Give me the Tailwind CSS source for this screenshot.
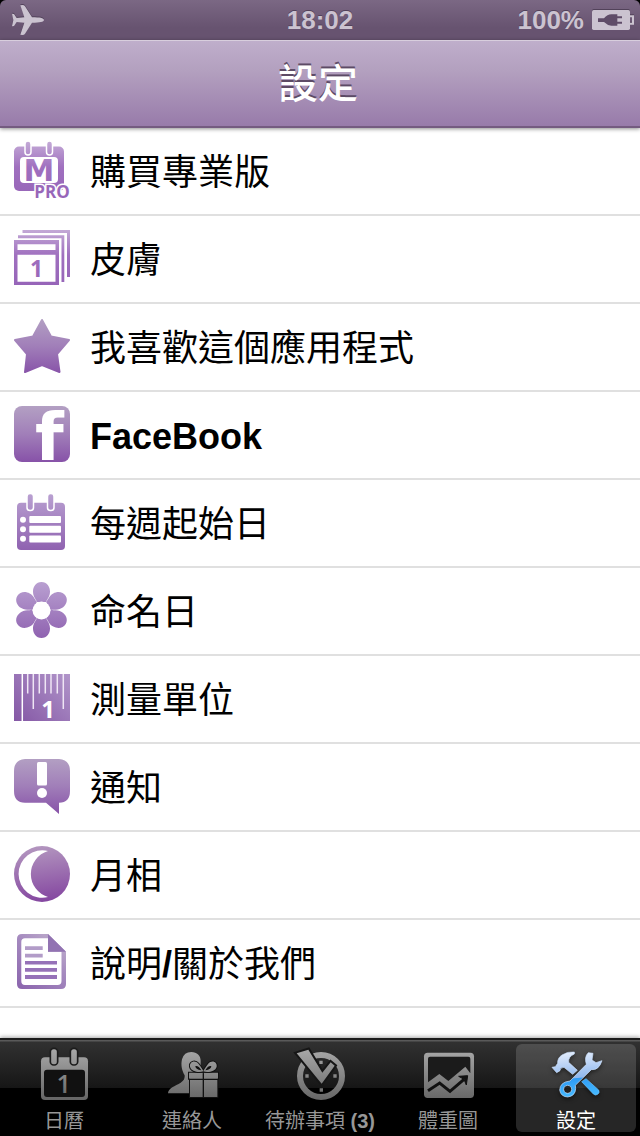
<!DOCTYPE html>
<html lang="zh-Hant">
<head>
    <meta charset="UTF-8">
    <meta name="viewport" content="width=device-width, initial-scale=1.0">
    <title>設定</title>
    <script src="https://cdn.jsdelivr.net/npm/@tailwindcss/browser@4"></script>
</head>
<body class="min-h-screen flex flex-col bg-black font-['Liberation_Sans','Noto_Sans_CJK_TC',sans-serif]">
    <!-- Shared gradients -->
    <svg class="absolute w-0 h-0" aria-hidden="true">
        <defs>
            <linearGradient id="purple" gradientUnits="userSpaceOnUse" x1="0" y1="0" x2="0" y2="56">
                <stop offset="0" stop-color="#b3a0c3"/>
                <stop offset="0.5" stop-color="#a17fb9"/>
                <stop offset="1" stop-color="#8752a8"/>
            </linearGradient>
            <linearGradient id="violet" gradientUnits="userSpaceOnUse" x1="0" y1="0" x2="0" y2="56">
                <stop offset="0" stop-color="#c3a9d6"/>
                <stop offset="0.45" stop-color="#a070bf"/>
                <stop offset="1" stop-color="#9664b8"/>
            </linearGradient>
            <linearGradient id="lilac" gradientUnits="userSpaceOnUse" x1="0" y1="0" x2="0" y2="56">
                <stop offset="0" stop-color="#b9a0d1"/>
                <stop offset="1" stop-color="#8f62b0"/>
            </linearGradient>
            <linearGradient id="ruler" gradientUnits="userSpaceOnUse" x1="0" y1="51" x2="50" y2="0">
                <stop offset="0" stop-color="#8457a5"/>
                <stop offset="1" stop-color="#b094c9"/>
            </linearGradient>
            <linearGradient id="moon" gradientUnits="userSpaceOnUse" x1="24" y1="0" x2="32" y2="56">
                <stop offset="0" stop-color="#b396bf"/>
                <stop offset="1" stop-color="#8446a0"/>
            </linearGradient>
            <linearGradient id="paper" gradientUnits="userSpaceOnUse" x1="52" y1="0" x2="8" y2="56">
                <stop offset="0" stop-color="#a78dbf"/>
                <stop offset="0.2" stop-color="#b7a3c8"/>
                <stop offset="0.45" stop-color="#a58abf"/>
                <stop offset="1" stop-color="#8c66ae"/>
            </linearGradient>
            <linearGradient id="gray" gradientUnits="userSpaceOnUse" x1="0" y1="16" x2="0" y2="168">
                <stop offset="0" stop-color="#a8a8a8"/>
                <stop offset="1" stop-color="#666666"/>
            </linearGradient>
            <linearGradient id="blue" gradientUnits="userSpaceOnUse" x1="80" y1="20" x2="92" y2="160">
                <stop offset="0" stop-color="#e6eefc"/>
                <stop offset="0.58" stop-color="#8fb8ef"/>
                <stop offset="0.6" stop-color="#2f9bf5"/>
                <stop offset="1" stop-color="#46bbff"/>
            </linearGradient>
        </defs>
    </svg>

    <!-- Status bar -->
    <div class="h-10 px-3 grid grid-cols-3 items-center rounded-t-md bg-linear-to-b from-[#7b6884] to-[#675370] to-70% text-[#cbc3d0] text-[26px] leading-10 font-bold">
        <svg class="w-8 h-[30px] drop-shadow-[0_-1px_0_#52425a]" viewBox="0 0 96 90" fill="currentColor" role="img" aria-label="飛航模式">
            <path d="M96 45C95 39 84 37 60 37L39 4Q37 0 31 0L25 1L37 37L14 39L6 27L0 26L4 45L0 64L6 63L14 51L37 53L25 89L31 90Q37 90 39 86L60 53C84 53 95 51 96 45Z"/>
        </svg>
        <div class="text-center [text-shadow:0_-1px_0_#52425a]">18:02</div>
        <div class="flex items-center justify-end gap-2 -mr-1.5">
            <span class="[text-shadow:0_-1px_0_#52425a]">100%</span>
            <svg class="w-[42px] h-5 shrink-0 drop-shadow-[0_-1px_0_#52425a]" viewBox="0 0 126 60" role="img" aria-label="充電中">
                <rect width="114" height="60" rx="5" fill="currentColor"/>
                <path d="M114 19H123V41H114" fill="none" stroke="currentColor" stroke-width="6"/>
                <path d="M18 25H36Q46 13 58 13H76V19H90V25H76V35H90V41H76V47H58Q46 46 36 36H18Z" fill="#5f4c68"/>
            </svg>
        </div>
    </div>

    <!-- Title bar -->
    <header class="relative z-10 h-[88px] pr-1 flex items-center justify-center border-t border-b-2 border-t-[#d8cedd] border-b-[#745b80] bg-linear-to-b from-[#bfaecb] via-[#b3a0bf] via-35% to-[#987baa] shadow-[0_1px_4px_rgba(0,0,0,0.45)]">
        <h1 class="text-[40px] leading-[48px] font-medium text-white [text-shadow:0_-2px_0_#5d4b66]">設定</h1>
    </header>

    <!-- Settings list -->
    <main class="flex-1 bg-white text-black text-4xl">
        <ul>
            <li class="border-b-2 border-[#e0e0e0]">
                <a href="#" class="h-[86px] px-3.5 pt-3.5 flex items-start gap-5">
                    <svg class="size-14 shrink-0 overflow-visible" viewBox="0 0 56 56" fill="url(#violet)" aria-hidden="true">
                        <rect y="4.5" width="50" height="44.5" rx="5"/>
                        <rect x="11" y="-1" width="6" height="14" rx="3" stroke="#fff" stroke-width="1.5"/>
                        <rect x="32.500" y="-1" width="6" height="14" rx="3" stroke="#fff" stroke-width="1.5"/>
                        <rect x="6" y="15" width="38" height="26" rx="4" fill="#fff"/>
                        <text x="25" y="39" text-anchor="middle" font-family="DejaVu Sans" font-weight="700" font-size="31">M</text>
                        <text x="38" y="55.500" text-anchor="middle" font-family="Open Sans" font-weight="700" font-size="17" stroke="#fff" stroke-width="3" paint-order="stroke">PRO</text>
                    </svg>
                    <span class="leading-[62px]">購買專業版</span>
                </a>
            </li>
            <li class="border-b-2 border-[#e0e0e0]">
                <a href="#" class="h-[86px] px-3.5 pt-3.5 flex items-start gap-5">
                    <svg class="size-14 shrink-0" viewBox="0 0 56 56" aria-hidden="true">
                        <path d="M8.500 0H56V47H53V3H8.500Z M4 5.300H50.300V52H47.500V8.300H4Z" fill="url(#violet)"/>
                        <path d="M0 10H45V55H0Z M3.500 14.300V20H41.500V14.300Z M3.500 24.700V51.700H41.500V24.700Z" fill="url(#violet)" fill-rule="evenodd"/>
                        <text x="22.500" y="47" text-anchor="middle" font-family="Open Sans" font-weight="700" font-size="23" fill="url(#violet)">1</text>
                    </svg>
                    <span class="leading-[62px]">皮膚</span>
                </a>
            </li>
            <li class="border-b-2 border-[#e0e0e0]">
                <a href="#" class="h-[86px] px-3.5 pt-3.5 flex items-start gap-5">
                    <svg class="size-14 shrink-0" viewBox="0 0 56 56" aria-hidden="true">
                        <path d="M28 2L37 18.500L55 22L43 36L45.500 54L28 47L11 54L13 36L1 22L19 18.500Z" fill="url(#purple)" stroke="url(#purple)" stroke-width="2" stroke-linejoin="round"/>
                    </svg>
                    <span class="leading-[62px]">我喜歡這個應用程式</span>
                </a>
            </li>
            <li class="border-b-2 border-[#e0e0e0]">
                <a href="#" class="h-[86px] px-3.5 pt-3.5 flex items-start gap-5">
                    <svg class="size-14 shrink-0 overflow-visible" viewBox="0 0 56 56" aria-hidden="true">
                        <rect width="56" height="56" rx="8" fill="url(#purple)"/>
                        <text x="21" y="54" font-family="DejaVu Sans" font-weight="700" font-size="66" fill="#fff">f</text>
                    </svg>
                    <span class="leading-[62px] font-bold">FaceBook</span>
                </a>
            </li>
            <li class="border-b-2 border-[#e0e0e0]">
                <a href="#" class="h-[86px] px-3.5 pt-3.5 flex items-start gap-5">
                    <svg class="size-14 shrink-0" viewBox="0 0 56 56" fill="url(#lilac)" aria-hidden="true">
                        <rect x="3" y="8.700" width="48" height="47.300" rx="4"/>
                        <rect x="13" y="-0.500" width="6.500" height="17" rx="3" stroke="#fff" stroke-width="1.500"/>
                        <rect x="33.500" y="-0.500" width="6.500" height="17" rx="3" stroke="#fff" stroke-width="1.500"/>
                        <g fill="#fff">
                            <circle cx="9" cy="25.700" r="3"/>
                            <circle cx="9" cy="35.200" r="3"/>
                            <circle cx="9" cy="44.800" r="3"/>
                            <rect x="15.300" y="22" width="31.700" height="7" rx="1"/>
                            <rect x="15.300" y="31.800" width="31.700" height="7" rx="1"/>
                            <rect x="15.300" y="41.500" width="31.700" height="7" rx="1"/>
                        </g>
                    </svg>
                    <span class="leading-[62px]">每週起始日</span>
                </a>
            </li>
            <li class="border-b-2 border-[#e0e0e0]">
                <a href="#" class="h-[86px] px-3.5 pt-3.5 flex items-start gap-5">
                    <svg class="size-14 shrink-0" viewBox="0 0 56 56" aria-hidden="true">
                        <clipPath id="petals">
                            <path d="M27.500 0C33 0 36 5 36 9.500C36 14 34 16 32 20H23C21 16 19 14 19 9.500C19 5 22 0 27.500 0Z"/>
                            <path d="M27.500 0C33 0 36 5 36 9.500C36 14 34 16 32 20H23C21 16 19 14 19 9.500C19 5 22 0 27.500 0Z" transform="rotate(60 27.500 28)"/>
                            <path d="M27.500 0C33 0 36 5 36 9.500C36 14 34 16 32 20H23C21 16 19 14 19 9.500C19 5 22 0 27.500 0Z" transform="rotate(120 27.500 28)"/>
                            <path d="M27.500 0C33 0 36 5 36 9.500C36 14 34 16 32 20H23C21 16 19 14 19 9.500C19 5 22 0 27.500 0Z" transform="rotate(180 27.500 28)"/>
                            <path d="M27.500 0C33 0 36 5 36 9.500C36 14 34 16 32 20H23C21 16 19 14 19 9.500C19 5 22 0 27.500 0Z" transform="rotate(240 27.500 28)"/>
                            <path d="M27.500 0C33 0 36 5 36 9.500C36 14 34 16 32 20H23C21 16 19 14 19 9.500C19 5 22 0 27.500 0Z" transform="rotate(300 27.500 28)"/>
                        </clipPath>
                        <rect width="56" height="56" fill="url(#lilac)" clip-path="url(#petals)"/>
                        <circle cx="27.500" cy="28.500" r="9" fill="#fff"/>
                    </svg>
                    <span class="leading-[62px]">命名日</span>
                </a>
            </li>
            <li class="border-b-2 border-[#e0e0e0]">
                <a href="#" class="h-[86px] px-3.5 pt-3.5 flex items-start gap-5">
                    <svg class="size-14 shrink-0" viewBox="0 0 56 56" aria-hidden="true">
                        <rect y="4" width="56" height="47" fill="url(#ruler)"/>
                        <path d="M8.300 4V51" stroke="#fff" stroke-width="1.500"/>
                        <path d="M13.700 4V23.500M19.300 4V39M25.300 4V23.500M31.300 4V23.500M37 4V23.500M43.300 4V23.500M49.300 4V39" stroke="#efe6f5" stroke-width="1.500"/>
                        <text x="34" y="48" text-anchor="middle" font-family="Open Sans" font-weight="700" font-size="24" fill="#fff">1</text>
                    </svg>
                    <span class="leading-[62px]">測量單位</span>
                </a>
            </li>
            <li class="border-b-2 border-[#e0e0e0]">
                <a href="#" class="h-[86px] px-3.5 pt-3.5 flex items-start gap-5">
                    <svg class="size-14 shrink-0" viewBox="0 0 56 56" aria-hidden="true">
                        <path d="M11 1H45Q56 2 56 13V33Q56 44.700 45 44.700V56L32 44.700H11Q0 44.700 0 33V13Q0 2 11 1Z" fill="url(#purple)"/>
                        <rect x="23" y="4" width="10" height="23.500" rx="1.500" fill="#fff"/>
                        <circle cx="28" cy="35" r="5" fill="#fff"/>
                    </svg>
                    <span class="leading-[62px]">通知</span>
                </a>
            </li>
            <li class="border-b-2 border-[#e0e0e0]">
                <a href="#" class="h-[86px] px-3.5 pt-3.5 flex items-start gap-5">
                    <svg class="size-14 shrink-0" viewBox="0 0 56 56" aria-hidden="true">
                        <circle cx="28" cy="28" r="28" fill="url(#moon)"/>
                        <path d="M34 5A23.700 23.700 0 1 0 34 51A24 24 0 0 1 34 5Z" fill="#fff"/>
                    </svg>
                    <span class="leading-[62px]">月相</span>
                </a>
            </li>
            <li class="border-b-2 border-[#e0e0e0]">
                <a href="#" class="h-[86px] px-3.5 pt-3.5 flex items-start gap-5">
                    <svg class="size-14 shrink-0" viewBox="0 0 56 56" fill="url(#paper)" aria-hidden="true">
                        <path d="M8 0H34L52 17.700V50Q52 55 47 55H8Q3 55 3 50V5Q3 0 8 0Z"/>
                        <path d="M11 4.300H34V17.700H47.500V47Q47.500 51 43.500 51H11Q7.300 51 7.300 47V8Q7.300 4.300 11 4.300Z" fill="#fff"/>
                        <path d="M34 0L52 17.700H34Z" fill="#9273b2"/>
                        <path d="M11 12.300H28.700V16H11Z M11 19.700H28.700V23.500H11Z" fill="#b29cc8"/>
                        <path d="M11 27H43V30.500H11Z M11 34H43V37.700H11Z M11 41H43V45H11Z" fill="#9672b8"/>
                    </svg>
                    <span class="leading-[62px]">說明<b>/</b>關於我們</span>
                </a>
            </li>
        </ul>
    </main>

    <!-- Tab bar -->
    <nav class="relative h-[98px] pt-1 pb-1 border-t-2 border-[#1c1c1c] grid grid-cols-5 shadow-[0_-1px_4px_rgba(0,0,0,0.35)] bg-[linear-gradient(#5a5a5a_0,#5a5a5a_1px,#313131_2px,#161616_48px,#000_48px)] text-[#979797] text-xl leading-[22px]">
        <a href="#" class="mx-1 flex flex-col items-center gap-1.5 whitespace-nowrap">
            <svg class="size-[60px]" viewBox="0 0 180 180" fill="url(#gray)" aria-hidden="true">
                <rect x="21" y="40" width="141" height="128" rx="12"/>
                <rect x="49" y="13" width="22" height="50" rx="10" stroke="#1c1c1c" stroke-width="5"/>
                <rect x="109" y="13" width="22" height="50" rx="10" stroke="#1c1c1c" stroke-width="5"/>
                <rect x="30" y="77" width="123" height="82" rx="9" fill="#111"/>
                <text x="89" y="147" text-anchor="middle" font-family="Open Sans" font-weight="600" font-size="76">1</text>
            </svg>
            <span>日曆</span>
        </a>
        <a href="#" class="mx-1 flex flex-col items-center gap-1.5 whitespace-nowrap">
            <svg class="size-[60px]" viewBox="0 0 180 180" fill="url(#gray)" aria-hidden="true">
                <path d="M88 24C105 24 116 36 116 50L114 148H18C18 132 40 126 56 116Q70 108 68 94C60 80 56 64 60 46Q66 24 88 24Z"/>
                <path d="M81 86H168V104H166V159H84V104H81Z" stroke="#111" stroke-width="6" paint-order="stroke"/>
                <path d="M124 82C112 86 88 84 84 68C82 54 98 46 110 60C118 70 122 76 124 82C126 76 132 68 138 60C150 46 166 54 164 68C160 84 136 86 124 82Z" stroke="#111" stroke-width="6" paint-order="stroke"/>
                <path d="M118 79Q100 76 100 66Q110 64 118 79ZM130 79Q148 76 148 66Q138 64 130 79Z" fill="#111"/>
                <path d="M81 106H168M124 88V160" stroke="#111" stroke-width="4"/>
            </svg>
            <span>連絡人</span>
        </a>
        <a href="#" class="mx-1 flex flex-col items-center gap-1.5 whitespace-nowrap">
            <svg class="size-[60px]" viewBox="0 0 180 180" fill="url(#gray)" aria-hidden="true">
                <circle cx="93" cy="96" r="63" fill="none" stroke="url(#gray)" stroke-width="18"/>
                <path d="M88 50H98V60H88ZM46 91H56V101H46ZM130 91H140V101H130ZM89 133H99V143H89Z"/>
                <path d="M20 28L55 17L97 86L122 55L134 65L95 119Z" stroke="#161616" stroke-width="12" paint-order="stroke"/>
            </svg>
            <span>待辦事項 <b>(3)</b></span>
        </a>
        <a href="#" class="mx-1 flex flex-col items-center gap-1.5 whitespace-nowrap">
            <svg class="size-[60px]" viewBox="0 0 180 180" fill="url(#gray)" aria-hidden="true">
                <rect x="18" y="26" width="150" height="136" rx="11"/>
                <path d="M36 38H151Q157 38 157 44V88L142 68L91 111L64 90L30 115V44Q30 38 36 38Z" fill="#1b1b1b"/>
                <path d="M30 140L65 117L96 142L138 106" fill="none" stroke="#111" stroke-width="9"/>
                <path d="M122 97L149 95L145 123L138 106Z" fill="#111" stroke="#111" stroke-width="3"/>
            </svg>
            <span>體重圖</span>
        </a>
        <a href="#" aria-current="page" class="mx-1 flex flex-col items-center gap-1.5 whitespace-nowrap rounded-md bg-white/15 text-white">
            <svg class="size-[60px] drop-shadow-[0_2px_2px_rgba(0,0,0,0.5)]" viewBox="0 0 180 180" fill="url(#blue)" stroke="#cfe4ff" stroke-width="2" stroke-linejoin="round" aria-hidden="true">
                <path d="M85 24Q64 22 48 33Q34 42 35 58L28 68L18 70L32 86L42 80Q42 70 54 70L80 91L94 79L68 55Q66 38 85 30Z"/>
                <path d="M107 113L120 104L158 138Q162 146 155 151Q148 156 142 150Z" stroke="#6cc4ff"/>
                <path fill-rule="evenodd" d="M127 26Q114 38 121 61L72 111Q42 114 41 138Q44 158 65 159Q88 156 89 134L88 124L136 77Q158 80 168 50L150 56L138 48L141 28ZM65 124A12 12 0 1 1 64.900 124Z"/>
            </svg>
            <span>設定</span>
        </a>
    </nav>
</body>
</html>
